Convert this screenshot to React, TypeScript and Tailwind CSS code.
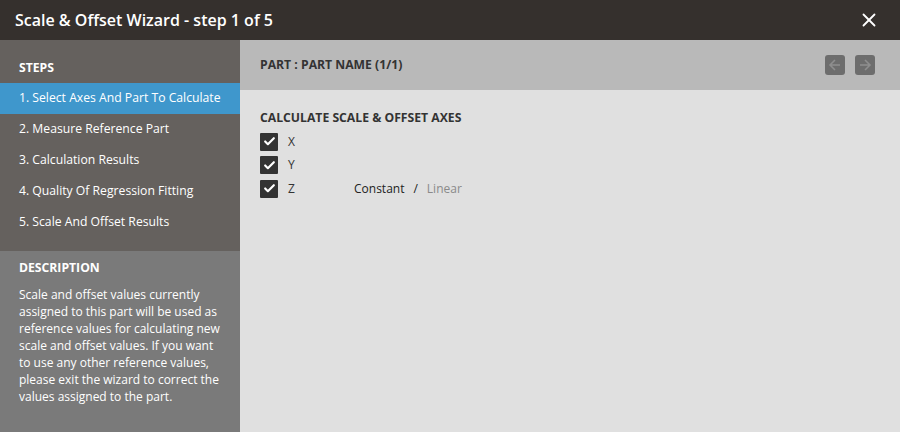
import { Check, X } from "lucide-react";

const steps = [
  "1. Select Axes And Part To Calculate",
  "2. Measure Reference Part",
  "3. Calculation Results",
  "4. Quality Of Regression Fitting",
  "5. Scale And Offset Results",
];

function AxisRow({ label, children }: { label: string; children?: React.ReactNode }) {
  return (
    <div className="flex h-[23.5px] items-center">
      <span className="flex h-[18px] w-[18px] items-center justify-center rounded-[1px] bg-[#333333]">
        <Check className="h-[13px] w-[13px] text-white" strokeWidth={4} />
      </span>
      <span className="ml-[10px] w-[66px] text-[12px] text-[#333333]">{label}</span>
      {children}
    </div>
  );
}

function ArrowButton({ dir }: { dir: "left" | "right" }) {
  return (
    <button className="flex h-5 w-5 items-center justify-center rounded-[3px] bg-[#6d6d6d]">
      <svg viewBox="0 0 20 20" className="h-5 w-5" fill="none" stroke="#8e8e8e" strokeWidth={1.6}>
        {dir === "left" ? (
          <path d="M15 10H5.5M10 5L5 10l5 5" />
        ) : (
          <path d="M5 10h9.5M10 5l5 5-5 5" />
        )}
      </svg>
    </button>
  );
}

export default function App() {
  return (
    <div className="flex h-[432px] w-[900px] flex-col overflow-hidden font-['Open_Sans',sans-serif]">
      <header className="flex h-10 shrink-0 items-center justify-between bg-[#35302d] pl-[15px] pr-[20px]">
        <h1 className="text-[16px] font-semibold text-white">Scale &amp; Offset Wizard - step 1 of 5</h1>
        <X className="h-[22px] w-[22px] text-white" strokeWidth={2} />
      </header>

      <div className="flex min-h-0 flex-1">
        <aside className="flex w-[240px] shrink-0 flex-col">
          <section className="h-[211px] bg-[#65615e] pt-[19px]">
            <h2 className="px-[19px] text-[12.2px] font-bold leading-[18px] text-white">STEPS</h2>
            <ul className="mt-[6px]">
              {steps.map((step, i) => (
                <li
                  key={step}
                  className={`flex h-[31px] items-center whitespace-nowrap px-[19px] text-[12.2px] text-white ${
                    i === 0 ? "bg-[#3f97cc]" : ""
                  }`}
                >
                  {step}
                </li>
              ))}
            </ul>
          </section>
          <section className="flex-1 bg-[#7a7a7a] px-[19px] pt-[8px]">
            <h2 className="text-[12.2px] font-bold leading-[18px] text-white">DESCRIPTION</h2>
            <p className="mt-[9px] text-[12px] leading-[17px] text-white">
              Scale and offset values currently assigned to this part will be used as reference values for
              calculating new scale and offset values. If you want to use any other reference values, please exit the
              wizard to correct the values assigned to the part.
            </p>
          </section>
        </aside>

        <main className="flex flex-1 flex-col bg-[#e0e0e0]">
          <div className="flex h-[50px] shrink-0 items-center justify-between bg-[#b9b9b9] pl-5 pr-[25px]">
            <span className="text-[12.2px] font-bold text-[#333333]">PART : PART NAME (1/1)</span>
            <div className="flex gap-[10px]">
              <ArrowButton dir="left" />
              <ArrowButton dir="right" />
            </div>
          </div>
          <div className="px-5 pt-[19px]">
            <h3 className="text-[12.2px] font-bold leading-[18px] text-[#333333]">CALCULATE SCALE &amp; OFFSET AXES</h3>
            <div className="mt-[3px]">
              <AxisRow label="X" />
              <AxisRow label="Y" />
              <AxisRow label="Z">
                <span className="text-[12px] text-[#222222]">Constant</span>
                <span className="mx-[9px] text-[12px] text-[#222222]">/</span>
                <span className="text-[12px] text-[#8a8a8a]">Linear</span>
              </AxisRow>
            </div>
          </div>
        </main>
      </div>
    </div>
  );
}
